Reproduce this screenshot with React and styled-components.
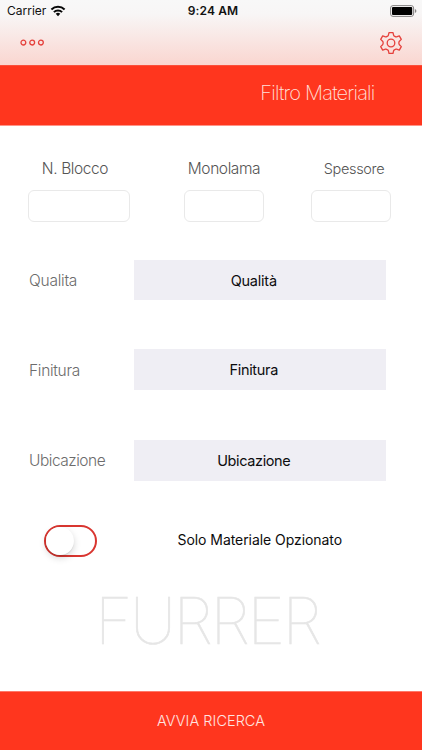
import React, { useState } from "react";
import styled, { createGlobalStyle } from "styled-components";

const GlobalStyle = createGlobalStyle`
  * { box-sizing: border-box; }
  body { margin: 0; background: #fff; font-family: Inter, "Liberation Sans", sans-serif; }
  button, input { font: inherit; margin: 0; padding: 0; border: 0; }
`;

const Screen = styled.div`
  width: 422px;
  height: 750px;
  display: flex;
  flex-direction: column;
  overflow: hidden;
  background: #fff;
`;

const Header = styled.header`
  flex: none;
  height: 65px;
  background: linear-gradient(#f8f8f8 0, #f8f6f6 14px, #fad6d0 65px);
`;

const StatusBar = styled.div`
  display: grid;
  grid-template-columns: 1fr auto 1fr;
  align-items: center;
  height: 22px;
  padding: 0 5px 0 7px;
  font-size: 12px;
  line-height: 22px;
  color: #111;
`;

const Carrier = styled.div`
  display: flex;
  align-items: center;
  gap: 4px;
  letter-spacing: 0;
  svg { display: block; }
`;

const Clock = styled.div`
  font-weight: 600;
  letter-spacing: 0.1px;
  padding-left: 2px;
`;

const BatteryIcon = styled.svg`
  display: block;
  justify-self: end;
`;

const NavBar = styled.nav`
  display: flex;
  justify-content: space-between;
  align-items: center;
  height: 41px;
  padding: 0 19px 0 20px;
`;

const IconButton = styled.button`
  background: none;
  display: block;
  svg { display: block; }
`;

const TitleBand = styled.div`
  flex: none;
  height: 61px;
  padding: 15px 47.5px 0 0;
  background: #ff361e;
  border-top: 1px solid #fb4f3b;
  border-bottom: 1px solid #ff9488;
  text-align: right;
`;

const Title = styled.h1`
  margin: 0;
  font-size: 20px;
  line-height: 24px;
  font-weight: 200;
  letter-spacing: -0.8px;
  color: #ffe0dc;
`;

const Fields = styled.div`
  display: flex;
  height: 134px;
  padding: 32px 31px 0 28px;
  justify-content: space-between;
`;

const Field = styled.label`
  display: flex;
  flex-direction: column;
  align-items: center;
  width: ${(p) => p.$width}px;
  margin-left: ${(p) => p.$offset || 0}px;
`;

const FieldLabel = styled.span`
  height: 32px;
  line-height: 22px;
  white-space: nowrap;
  font-size: ${(p) => p.$size}px;
  font-weight: 300;
  letter-spacing: ${(p) => p.$tracking}px;
  margin-left: ${(p) => p.$shift || 0}px;
  color: #555;
`;

const FieldInput = styled.input`
  width: 100%;
  height: 31.5px;
  border: 1px solid #e9e9e9 !important;
  border-radius: 6px;
  background: #fff;
  outline: none;
`;

const PickerRow = styled.div`
  display: flex;
  align-items: center;
  height: ${(p) => p.$height}px;
  padding: 0 36px 0 29px;
  margin-bottom: ${(p) => p.$after}px;
`;

const PickerLabel = styled.span`
  width: 104.5px;
  padding-top: ${(p) => p.$drop}px;
  font-size: 15.5px;
  font-weight: 300;
  letter-spacing: ${(p) => p.$tracking}px;
  color: #6c6c6c;
  line-height: 22px;
`;

const Picker = styled.button`
  flex: 1;
  align-self: stretch;
  padding: 0 12px 0 0;
  background: #efeef4;
  color: #0c0c0e;
  font-size: 14.5px;
  letter-spacing: ${(p) => p.$tracking}px;
`;

const SwitchRow = styled.div`
  display: flex;
  align-items: center;
  height: 32px;
  padding-left: 44px;
`;

const Switch = styled.button`
  width: 53px;
  height: 32px;
  border: 2px solid #d93630;
  border-radius: 16px;
  background: #fff;
  display: flex;
  align-items: center;
  justify-content: ${(p) => (p.$on ? "flex-end" : "flex-start")};
`;

const Thumb = styled.span`
  width: 28px;
  height: 28px;
  border-radius: 50%;
  background: #fff;
  box-shadow: 0 3px 7px rgba(0, 0, 0, 0.17), 0 1px 1px rgba(0, 0, 0, 0.08);
`;

const SwitchText = styled.span`
  margin-left: 80.5px;
  padding-bottom: 2px;
  font-size: 14px;
  line-height: 20px;
  letter-spacing: -0.06px;
  color: #0c0c0c;
`;

const Brand = styled.div`
  margin: 26px 0 0 95px;
  font-size: 64px;
  line-height: 76px;
  font-weight: 100;
  letter-spacing: -2.4px;
  color: #e6e6e6;
  -webkit-text-stroke: 0.6px #e6e6e6;
`;

const SearchButton = styled.button`
  flex: none;
  height: 59px;
  margin-top: auto;
  background: #ff361e;
  border-top: 1px solid #ff7868;
  padding-bottom: 1px;
  color: #ffe4e0;
  font-size: 14.5px;
  font-weight: 300;
  letter-spacing: 0.03px;
`;

const rows = [
  { label: "Qualita", value: "Qualità", lt: -0.25, vt: -0.22, drop: 2, height: 40, after: 49 },
  { label: "Finitura", value: "Finitura", lt: -0.3, vt: -0.3, drop: 2, height: 41, after: 50 },
  { label: "Ubicazione", value: "Ubicazione", lt: -0.48, vt: -0.38, drop: 0, height: 41, after: 44 },
];

export default function App() {
  const [on, setOn] = useState(false);
  return (
    <>
      <GlobalStyle />
      <Screen>
        <Header>
          <StatusBar>
            <Carrier>
              Carrier
              <svg width="16" height="12" viewBox="0 0 16 12" fill="none" stroke="#080808" strokeWidth="2">
                <path d="M1.4 4.5a9.4 9.4 0 0 1 13.2 0M3.9 7.1a5.8 5.8 0 0 1 8.2 0" />
                <path d="M5.7 8.8a3.3 3.3 0 0 1 4.6 0L8 11.2z" fill="#080808" stroke="none" />
              </svg>
            </Carrier>
            <Clock>9:24 AM</Clock>
            <BatteryIcon width="27" height="12" viewBox="0 0 27 12">
              <rect x="0.6" y="0.6" width="23" height="10.8" rx="2.4" fill="none" stroke="#858383" />
              <rect x="2" y="2" width="20.2" height="8" rx="1" fill="#000" />
              <path d="M24.9 4v4q1.5-.6 1.5-2t-1.5-2z" fill="#858383" />
            </BatteryIcon>
          </StatusBar>
          <NavBar>
            <IconButton aria-label="Menu">
              <svg width="26" height="8" viewBox="0 0 26 8" fill="none" stroke="#e5413c" strokeWidth="1.3">
                <circle cx="3.4" cy="3.6" r="2.4" />
                <circle cx="12.2" cy="3.6" r="2.4" />
                <circle cx="20.9" cy="3.6" r="2.4" />
              </svg>
            </IconButton>
            <IconButton aria-label="Impostazioni">
              <svg width="24" height="24" viewBox="0 0 24 24" fill="none" stroke="#e5413c" strokeWidth="1.3" strokeLinejoin="round">
                <path d="M10 1.6h4l.6 2.6q.2.6.8.9l.9.5q.6.4 1.2.2l2.8-.9 2 3.5-1.9 1.9q-.5.5-.5 1.1v1.2q0 .6.5 1.1l1.9 1.9-2 3.5-2.8-.9q-.6-.2-1.2.2l-.9.5q-.6.3-.8.9L14 22.4h-4l-.6-2.6q-.2-.6-.8-.9l-.9-.5q-.6-.4-1.2-.2l-2.8.9-2-3.5 1.9-1.9q.5-.5.5-1.1v-1.2q0-.6-.5-1.1L1.7 8.4l2-3.5 2.8.9q.6.2 1.2-.2l.9-.5q.6-.3.8-.9z" />
                <circle cx="12" cy="12" r="3.8" />
              </svg>
            </IconButton>
          </NavBar>
        </Header>
        <TitleBand>
          <Title>Filtro Materiali</Title>
        </TitleBand>
        <Fields>
          <Field $width={102}>
            <FieldLabel $size={15.5} $tracking={-0.4} $shift={-8}>N. Blocco</FieldLabel>
            <FieldInput />
          </Field>
          <Field $width={80} $offset={7}>
            <FieldLabel $size={15.5} $tracking={-0.4}>Monolama</FieldLabel>
            <FieldInput />
          </Field>
          <Field $width={80}>
            <FieldLabel $size={14.5} $tracking={-0.35} $shift={6}>Spessore</FieldLabel>
            <FieldInput />
          </Field>
        </Fields>
        {rows.map((r) => (
          <PickerRow key={r.label} $height={r.height} $after={r.after}>
            <PickerLabel $tracking={r.lt} $drop={r.drop}>{r.label}</PickerLabel>
            <Picker $tracking={r.vt}>{r.value}</Picker>
          </PickerRow>
        ))}
        <SwitchRow>
          <Switch role="switch" aria-checked={on} $on={on} onClick={() => setOn(!on)}>
            <Thumb />
          </Switch>
          <SwitchText>Solo Materiale Opzionato</SwitchText>
        </SwitchRow>
        <Brand>FURRER</Brand>
        <SearchButton>AVVIA RICERCA</SearchButton>
      </Screen>
    </>
  );
}
